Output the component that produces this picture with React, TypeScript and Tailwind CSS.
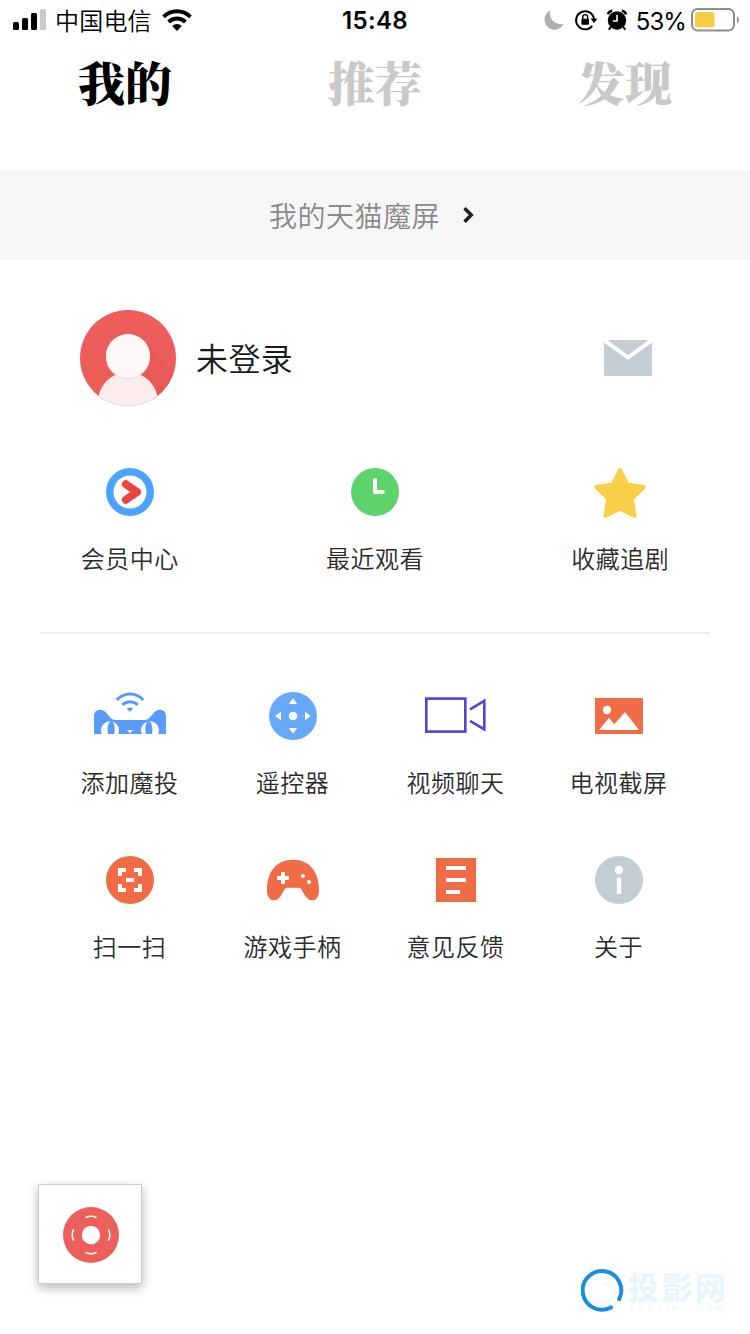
import type { ReactNode } from 'react'

// ─── Status bar ──────────────────────────────────────────────

function StatusBar() {
  return (
    <div className="grid grid-cols-3 h-10 items-center text-black">
      <div className="flex items-center pl-[13px]">
        <svg width="34" height="22" viewBox="0 0 34 22">
          <rect x="0" y="13" width="6" height="8" rx="1.5" />
          <rect x="9" y="9" width="6" height="12" rx="1.5" />
          <rect x="18" y="4" width="6" height="17" rx="1.5" />
          <rect x="27" y="0" width="6" height="21" rx="1.5" fill="#cbcbcb" />
        </svg>
        <span className="ml-2 pt-[3px] text-[24px] leading-none font-[350] tracking-[0.2px] whitespace-nowrap">中国电信</span>
        <svg className="ml-[10px]" width="30" height="22" viewBox="0 0 30 22" fill="none" stroke="#000" strokeWidth="4">
          <path d="M1.6 7.8 A19 19 0 0 1 28.4 7.8" />
          <path d="M6.6 13 A12 12 0 0 1 23.4 13" />
          <path d="M10.2 17 A7 7 0 0 1 19.8 17 L15 22Z" fill="#000" stroke="none" />
        </svg>
      </div>
      <div className="pt-[2px] text-center text-[24px] font-semibold leading-none tracking-[0.4px]">15:48</div>
      <div className="flex items-center justify-end pr-[10px]">
        <svg width="22" height="22" viewBox="0 0 22 22">
          <path d="M7.5 1.5 A10 10 0 1 0 20.6 14.8 A10.6 10.6 0 0 1 7.5 1.5Z" fill="#b0b0b0" />
        </svg>
        <svg className="ml-[9px]" width="24" height="22" viewBox="0 0 24 22" fill="none" stroke="#000" strokeWidth="2">
          <path d="M18.2 16.8 A9 9 0 1 1 20 10" />
          <path d="M16.6 9.5 H23.4 L20 14Z" fill="#000" stroke="none" />
          <rect x="7.4" y="9.8" width="7.6" height="6" rx="1" fill="#000" stroke="none" />
          <path d="M8.8 10 V8 A2.4 2.4 0 0 1 13.6 8 V10" strokeWidth="1.4" />
        </svg>
        <svg className="ml-[8px]" width="22" height="22" viewBox="0 0 22 22" fill="none" stroke="#000">
          <circle cx="11" cy="11.5" r="9.2" fill="#000" stroke="none" />
          <path d="M2 5.4 A5 5 0 0 1 6.2 1.8 M20 5.4 A5 5 0 0 0 15.8 1.8" strokeWidth="2.6" />
          <path d="M4.6 18 L2.8 20.8 M17.4 18 L19.2 20.8" strokeWidth="2" />
          <path d="M11 6 V12 H6.8" stroke="#fff" strokeWidth="1.6" />
        </svg>
        <span className="ml-[8px] pt-[3px] text-[24px] leading-none tracking-[-0.9px]">53%</span>
        <svg className="ml-[5px]" width="49" height="24" viewBox="0 0 49 24">
          <rect x="1" y="1" width="42" height="21.5" rx="5.5" fill="none" stroke="#8e8e8e" strokeWidth="2" />
          <rect x="4" y="4" width="19.5" height="15.5" rx="2.5" fill="#f7cd46" />
          <path d="M46 8 Q50 11.7 46 15.5Z" fill="#8e8e8e" />
        </svg>
      </div>
    </div>
  )
}

// ─── Icons (80 x 56 box) ─────────────────────────────────────

function Icon({ children }: { children: ReactNode }) {
  return (
    <svg width="80" height="56" viewBox="0 0 80 56" fill="none">
      {children}
    </svg>
  )
}

const MemberIcon = (
  <Icon>
    <circle cx="40" cy="28" r="24" fill="#4ca3fb" />
    <circle cx="40" cy="28" r="16.5" fill="#fff" />
    <path d="M35.8 20.2 L47.2 28 L35.8 35.8" stroke="#ec4440" strokeWidth="7.8" strokeLinecap="round" strokeLinejoin="round" />
  </Icon>
)

const RecentIcon = (
  <Icon>
    <circle cx="40" cy="28" r="24" fill="#5dd36b" />
    <path d="M40 16.2 V28 H47.6" stroke="#fff" strokeWidth="4.2" strokeLinecap="round" strokeLinejoin="round" />
  </Icon>
)

const FavoriteIcon = (
  <Icon>
    <path
      d="M40 6.2 L47.2 20.6 L63.6 23 L51.8 34.8 L54.6 52 L40 44.5 L25.4 52 L28.2 34.8 L16.4 23 L32.8 20.6Z"
      fill="#f8cf46" stroke="#f8cf46" strokeWidth="4" strokeLinejoin="round"
    />
  </Icon>
)

const CatIcon = (
  <Icon>
    <path d="M26.8 12 A17.4 17.4 0 0 1 53.2 12 M32.4 17 A10.5 10.5 0 0 1 47.6 17" stroke="#5a9bf8" strokeWidth="3" />
    <path d="M36.8 20.4 Q40 18.4 43.2 20.4 L40 24Z" fill="#5a9bf8" />
    <path
      d="M4 46 V28 C4 21.5 11 19.8 15.5 24 L20.5 29.8 Q22.5 32 25.5 32 H54.5 Q57.5 32 59.5 29.8 L64.5 24 C69 19.8 76 21.5 76 28 V46Z"
      fill="#5a9bf8"
    />
    <path d="M11.8 46 A9 9 0 1 1 28.2 46Z M51.8 46 A9 9 0 1 1 68.2 46Z" fill="#fff" />
    <path d="M17.8 46 C16.8 39 18.6 33 21.4 33 C24.2 33 25.4 40 24.2 46Z M55.8 46 C54.6 40 55.8 33 58.6 33 C61.4 33 63.2 39 62.2 46Z" fill="#5a9bf8" />
    <path d="M37 42 H43 L40 45.2Z" fill="#fff" />
  </Icon>
)

const RemoteIcon = (
  <Icon>
    <circle cx="40" cy="28" r="24" fill="#68a8f9" />
    <circle cx="40" cy="28" r="4.3" fill="#fff" />
    <path d="M40 10.2 L44.2 16 H35.8Z M40 45.8 L35.8 40 H44.2Z M22.2 28 L28 23.8 V32.2Z M57.8 28 L52 32.2 V23.8Z" fill="#fff" />
  </Icon>
)

const VideoIcon = (
  <Icon>
    <rect x="10.3" y="10.6" width="39" height="33" stroke="#583fd6" strokeWidth="2.6" />
    <path d="M54 21.3 L68.3 12.8 V41.4 L54 32.9" stroke="#583fd6" strokeWidth="2.6" />
  </Icon>
)

const ScreenshotIcon = (
  <Icon>
    <rect x="16" y="10" width="48" height="36" fill="#ef6c47" />
    <circle cx="28" cy="22" r="4.2" fill="#fff" />
    <path d="M20 42 L30 30 L35.3 36.3 L46 24 L60 42Z" fill="#fff" />
  </Icon>
)

const ScanIcon = (
  <Icon>
    <circle cx="40" cy="28" r="24" fill="#ef6c47" />
    <path d="M30 24 V18 H36 M44 18 H50 V24 M50 32 V38 H44 M36 38 H30 V32 M36 28 H44" stroke="#fff" strokeWidth="4" />
  </Icon>
)

const GamepadIcon = (
  <Icon>
    <path
      d="M40 7.7 C57 7.7 66 20 66 38 C66 45 63.4 48.3 59 48.3 C53 48.3 50.5 40 47.5 36.2 Q47 35.7 46 35.7 H34 Q33 35.7 32.5 36.2 C29.5 40 27 48.3 21 48.3 C16.6 48.3 14 45 14 38 C14 20 23 7.7 40 7.7Z"
      fill="#ef6c47"
    />
    <path d="M24 26 H36 M30 20 V32" stroke="#fff" strokeWidth="4" />
    <circle cx="50" cy="24" r="2.1" fill="#fff" />
    <circle cx="56" cy="30" r="2.1" fill="#fff" />
  </Icon>
)

const FeedbackIcon = (
  <Icon>
    <rect x="20" y="6" width="40" height="44" fill="#ef6c47" />
    <path d="M30 16 H50 M30 28 H50 M30 40 H44" stroke="#fff" strokeWidth="4" />
  </Icon>
)

const AboutIcon = (
  <Icon>
    <circle cx="40" cy="28" r="24" fill="#c5ccd2" />
    <circle cx="40" cy="18" r="4.2" fill="#fff" />
    <rect x="37.8" y="25.5" width="4.4" height="16.5" rx="1" fill="#fff" />
  </Icon>
)

// ─── Data ────────────────────────────────────────────────────

const TABS = ['我的', '推荐', '发现']

const SHORTCUTS = [
  { label: '会员中心', icon: MemberIcon },
  { label: '最近观看', icon: RecentIcon },
  { label: '收藏追剧', icon: FavoriteIcon },
]

const TOOLS = [
  { label: '添加魔投', icon: CatIcon },
  { label: '遥控器', icon: RemoteIcon },
  { label: '视频聊天', icon: VideoIcon },
  { label: '电视截屏', icon: ScreenshotIcon },
  { label: '扫一扫', icon: ScanIcon },
  { label: '游戏手柄', icon: GamepadIcon },
  { label: '意见反馈', icon: FeedbackIcon },
  { label: '关于', icon: AboutIcon },
]

function Entry({ label, icon }: { label: string; icon: ReactNode }) {
  return (
    <button className="flex flex-col items-center">
      {icon}
      <span className="mt-[22px] h-[35px] text-[24px] leading-9 font-[350] tracking-[0.5px] text-[#2c2c2c]">{label}</span>
    </button>
  )
}

function Avatar() {
  return (
    <svg width="96" height="96" viewBox="0 0 96 96">
      <clipPath id="avatar">
        <circle cx="48" cy="48" r="48" />
      </clipPath>
      <g clipPath="url(#avatar)">
        <rect width="96" height="96" fill="#ed5e5b" />
        <path d="M64 31 L96 66 V96 H77 L62 64Z" fill="#e85a58" />
        <circle cx="48" cy="92" r="30" fill="#fceceb" />
        <circle cx="48" cy="47" r="22" fill="#f8d8d6" />
        <circle cx="48" cy="46" r="22" fill="#fff8f8" />
      </g>
    </svg>
  )
}

function Watermark() {
  return (
    <div className="flex pr-[21px]">
      <svg width="44" height="44" viewBox="0 0 44 44" fill="none">
        <circle cx="21" cy="22" r="13" stroke="#f1fafe" strokeWidth="2" />
        <path d="M21 15 A7 7 0 0 1 28 20" stroke="#edf8fe" strokeWidth="2" />
        <path d="M30 39.4 A19.3 19.3 0 1 1 38.2 31" stroke="#168fdd" strokeWidth="4" strokeLinecap="round" />
      </svg>
      <div className="flex flex-col w-[104px] pl-[3px] text-[#e6f6fd]">
        <span className="h-[36px] text-[31px] leading-[39px] font-bold tracking-[2.4px] whitespace-nowrap">投影网</span>
        <span className="h-[8px] pl-px font-['Liberation_Sans'] text-[8px] leading-[10px] tracking-[3.7px] whitespace-nowrap">TOUYING.COM</span>
      </div>
    </div>
  )
}

// ─── Main page ───────────────────────────────────────────────

export default function App() {
  return (
    <div className="flex flex-col w-[750px] h-[1334px] overflow-hidden bg-white font-['Inter','Noto_Sans_CJK_SC',sans-serif]">
      <StatusBar />

      <nav className="grid grid-cols-3 h-[130px] text-center font-['Noto_Serif_CJK_SC','Noto_Sans_CJK_SC',serif]">
        {TABS.map((tab, i) => (
          <span key={tab} className={`text-[47px] leading-[82px] font-black ${i === 0 ? 'text-black' : 'text-[#c9c9c9]'}`}>
            {tab}
          </span>
        ))}
      </nav>

      <div className="flex items-center h-[90px] bg-[#f6f6f6] pl-[269px]">
        <span className="pt-[4px] text-[28px] leading-none font-[350] tracking-[0.5px] text-[#8a8a8a]">我的天猫魔屏</span>
        <svg className="ml-[22px]" width="13" height="18" viewBox="0 0 13 18" fill="none">
          <path d="M2.5 2.2 L9.3 9 L2.5 15.8" stroke="#1c1c1c" strokeWidth="3.4" />
        </svg>
      </div>

      <div className="flex items-center h-24 mt-[50px] pl-20 pr-[98px]">
        <Avatar />
        <span className="ml-5 pt-[4px] text-[32px] leading-[48px] font-[350] tracking-[0.4px] text-[#1a1a1a]">未登录</span>
        <svg className="ml-auto" width="48" height="36" viewBox="0 0 48 36">
          <rect width="48" height="36" fill="#c5cdd3" />
          <path d="M0 0 L24 17.5 L48 0" fill="none" stroke="#fff" strokeWidth="4" />
        </svg>
      </div>

      <div className="grid grid-cols-3 mt-[58px] px-[7px]">
        {SHORTCUTS.map(s => <Entry key={s.label} {...s} />)}
      </div>

      <div className="h-[2px] mx-10 mt-[55px] bg-[#ededed]" />

      <div className="grid grid-cols-4 gap-y-[51px] mt-[54px] pl-[48px] pr-[50px]">
        {TOOLS.map(t => <Entry key={t.label} {...t} />)}
      </div>

      <div className="flex justify-between items-end mt-auto pl-[38px] pb-[22px]">
        <div className="flex items-center justify-center w-[104px] h-[100px] mb-[28px] pl-[2px] pt-[2px] bg-white border border-[#ccc] shadow-[0_4px_10px_rgba(0,0,0,0.28)]">
          <svg width="56" height="56" viewBox="0 0 56 56" fill="none">
            <circle cx="28" cy="28" r="28" fill="#ec605b" />
            <circle cx="28" cy="28" r="9.2" fill="#fff" />
            <path
              d="M23 10.4 Q28 8 33 10.4 M23 45.6 Q28 48 33 45.6 M10.4 23 Q8 28 10.4 33 M45.6 23 Q48 28 45.6 33"
              stroke="#fff" strokeWidth="1.6" strokeLinecap="round"
            />
          </svg>
        </div>
        <Watermark />
      </div>
    </div>
  )
}
